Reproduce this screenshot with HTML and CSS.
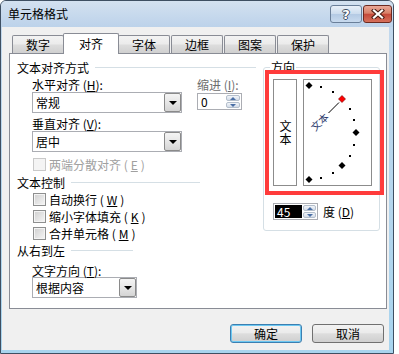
FILE: index.html
```html
<!DOCTYPE html>
<html lang="zh-CN">
<head>
    <meta charset="UTF-8">
    <title>单元格格式</title>
    <link rel="stylesheet" href="styles.css">
</head>
<body>
    <div class="window">
        <!-- Title bar -->
        <div class="titlebar">
            <span class="title">单元格格式</span>
            <div class="caption">
                <span class="cap-btn cap-help">?</span>
                <span class="cap-btn cap-close">
                    <svg width="14" height="10" viewBox="0 0 14 10">
                        <path d="M3 1.5 L11 8.5 M11 1.5 L3 8.5" stroke="#4a1c14" stroke-width="4.2" stroke-linecap="square"/>
                        <path d="M3 1.5 L11 8.5 M11 1.5 L3 8.5" stroke="#fff" stroke-width="2.2" stroke-linecap="square"/>
                    </svg>
                </span>
            </div>
        </div>

        <div class="client">
            <!-- Tabs -->
            <div class="tabs">
                <div class="tab">数字</div>
                <div class="tab active">对齐</div>
                <div class="tab">字体</div>
                <div class="tab">边框</div>
                <div class="tab">图案</div>
                <div class="tab">保护</div>
            </div>

            <div class="panel">
                <div class="col-left">
                    <div class="group-title gt-align">文本对齐方式</div>
                    <div class="align-row">
                        <div class="align-fields">
                            <div class="field-label">水平对齐 (<u>H</u>):</div>
                            <div class="combo combo-wide"><span>常规</span><i class="drop"></i></div>
                            <div class="field-label">垂直对齐 (<u>V</u>):</div>
                            <div class="combo combo-wide"><span>居中</span><i class="drop"></i></div>
                        </div>
                        <div class="indent">
                            <div class="field-label muted">缩进 (<u>I</u>):</div>
                            <div class="spin">
                                <span class="spin-value">0</span>
                                <span class="spin-btns"><i class="up"></i><i class="down"></i></span>
                            </div>
                        </div>
                    </div>
                    <div class="check disabled"><i class="box"></i>两端分散对齐 (<u>E</u>)</div>

                    <div class="group-title gt-control">文本控制</div>
                    <div class="check"><i class="box"></i>自动换行 (<u>W</u>)</div>
                    <div class="check"><i class="box"></i>缩小字体填充 (<u>K</u>)</div>
                    <div class="check"><i class="box"></i>合并单元格 (<u>M</u>)</div>

                    <div class="group-title gt-rtl">从右到左</div>
                    <div class="field-label indented">文字方向 (<u>T</u>):</div>
                    <div class="combo combo-dir"><span>根据内容</span><i class="drop"></i></div>
                </div>

                <div class="col-right">
                    <div class="orient">
                        <div class="orient-title">方向</div>
                        <div class="highlight">
                            <div class="vtext"><span>文本</span></div>
                            <div class="dial">
                                <svg width="67" height="105" viewBox="0 0 67 105">
                                    <g fill="#000">
                                        <polygon points="5,2 8.5,5.5 5,9 1.5,5.5"/>
                                        <polygon points="52,49 55.5,52.5 52,56 48.5,52.5"/>
                                        <polygon points="38,82 41.5,85.5 38,89 34.5,85.5"/>
                                        <polygon points="5,96 8.5,99.5 5,103 1.5,99.5"/>
                                        <rect x="16" y="6" width="2" height="2"/>
                                        <rect x="28" y="11" width="2" height="2"/>
                                        <rect x="45" y="28" width="2" height="2"/>
                                        <rect x="49" y="39" width="2" height="2"/>
                                        <rect x="49" y="64" width="2" height="2"/>
                                        <rect x="45" y="75" width="2" height="2"/>
                                        <rect x="28" y="92" width="2" height="2"/>
                                        <rect x="16" y="97" width="2" height="2"/>
                                    </g>
                                    <polygon points="38,15.5 41.5,19 38,22.5 34.5,19" fill="#f00" stroke="#600" stroke-width="0.6"/>
                                    <line x1="24.5" y1="33" x2="35" y2="22.5" stroke="#000" stroke-width="1"/>
                                    <text class="dial-text" x="5" y="4" transform="translate(5 52.5) rotate(-45)">文本</text>
                                </svg>
                            </div>
                        </div>
                        <div class="degree-row">
                            <div class="spin">
                                <span class="spin-value selected">45</span>
                                <span class="spin-btns"><i class="up"></i><i class="down"></i></span>
                            </div>
                            <span>度 (<u>D</u>)</span>
                        </div>
                    </div>
                </div>
            </div>

            <!-- Dialog buttons -->
            <div class="buttons">
                <div class="btn btn-default">确定</div>
                <div class="btn">取消</div>
            </div>
        </div>
    </div>
</body>
</html>
```

FILE: styles.css
```css
* {
    margin: 0;
    padding: 0;
    box-sizing: border-box;
}

body {
    background: #fff;
    font-family: "Noto Sans CJK SC", "Liberation Sans", sans-serif;
    font-size: 12px;
    line-height: 13px;
    color: #000;
}

u {
    text-decoration: underline;
    text-underline-offset: 1px;
}

/* Window frame */
.window {
    width: 394px;
    height: 354px;
    display: flex;
    flex-direction: column;
    padding: 0 4px 3px 1px;
    border: 1px solid #3e4f62;
    border-radius: 6px 6px 0 0;
    background: linear-gradient(#c4d8ec, #a8d4ee);
    overflow: hidden;
}

.titlebar {
    height: 26px;
    margin: 0 -4px 0 -1px;
    padding-left: 7px;
    display: flex;
    justify-content: space-between;
    align-items: flex-start;
    background: linear-gradient(#d3e1f0, #bcd2ea);
}

.title {
    margin-top: 6px;
}

.caption {
    display: flex;
    gap: 1px;
    margin: 4px 1px 0 0;
}

.cap-btn {
    height: 18px;
    border-radius: 3px;
    display: flex;
    align-items: center;
    justify-content: center;
}

.cap-help {
    width: 32px;
    border: 1px solid #6a7f99;
    background: linear-gradient(#e9f0f8, #ccdcee 48%, #b4cae4 52%, #c8daee);
    color: #fff;
    font: bold 13px "DejaVu Sans", sans-serif;
    text-shadow: 1px 0 #3e4c60, -1px 0 #3e4c60, 0 1px #3e4c60, 0 -1px #3e4c60;
}

.cap-close {
    width: 29px;
    border: 1px solid #6c2a20;
    background: linear-gradient(#eaa797, #d88068 45%, #c5493a 52%, #d6705b);
}

/* Client area */
.client {
    flex: 1;
    background: #f0f0f0;
    padding-top: 6px;
}

.tabs {
    height: 21px;
    padding-left: 10px;
    display: flex;
    align-items: flex-end;
    gap: 1px;
    position: relative;
    z-index: 1;
}

.tab {
    width: 52px;
    height: 18px;
    margin-bottom: 1px;
    border: 1px solid #898c95;
    border-bottom: none;
    border-radius: 2px 2px 0 0;
    background: linear-gradient(#f3f3f3, #ebebeb 48%, #dddddd 52%, #d0d0d0);
    text-align: center;
    line-height: 17px;
}

.tab.active {
    width: 56px;
    height: 21px;
    margin: 0 -2px;
    background: #fff;
    line-height: 19px;
    position: relative;
}

.panel {
    width: 378px;
    height: 256px;
    margin: -1px 0 0 7px;
    border: 1px solid #898c95;
    background: #fff;
    display: flex;
}

/* Left column */
.col-left {
    width: 246px;
    padding: 7px 0 0 7px;
}

.group-title {
    display: flex;
    align-items: center;
    gap: 6px;
}

.group-title::after {
    content: "";
    flex: 1;
    height: 1px;
    background: #d5dfe5;
}

.gt-align {
    width: 239px;
}

.gt-control {
    width: 183px;
    margin-top: 5px;
}

.gt-rtl {
    width: 116px;
    margin-top: 4px;
}

.align-row {
    display: flex;
    gap: 15px;
    padding-left: 15px;
}

.field-label {
    margin-top: 4px;
}

.field-label.indented {
    margin: 7px 0 0 15px;
}

.muted {
    color: #6d6d6d;
}

.combo {
    height: 21px;
    margin-top: 1px;
    padding-left: 3px;
    display: flex;
    align-items: center;
    justify-content: space-between;
    border: 1px solid #abadb3;
    background: #fff;
}

.combo-wide {
    width: 150px;
}

.combo-dir {
    width: 105px;
    margin-left: 15px;
    margin-top: 0;
}

.drop {
    width: 17px;
    height: 19px;
    border: 1px solid #8a8a8a;
    border-radius: 2px;
    background: linear-gradient(#f4f4f4, #e6e6e6 50%, #d4d4d4);
    display: flex;
    align-items: center;
    justify-content: center;
}

.drop::before {
    content: "";
    border-left: 4px solid transparent;
    border-right: 4px solid transparent;
    border-top: 4px solid #000;
    margin-top: 1px;
}

/* Spin boxes */
.indent .spin {
    margin-top: 2px;
}

.spin {
    width: 45px;
    height: 17px;
    padding: 1px;
    display: flex;
    gap: 1px;
    border: 1px solid #abadb3;
    background: #fff;
}

.spin-value {
    flex: 1;
    padding-left: 2px;
    line-height: 13px;
}

.spin-value.selected {
    flex: 0 0 27px;
    background: #000;
    color: #fff;
}

.spin-btns {
    width: 14px;
    display: flex;
    flex-direction: column;
    gap: 1px;
}

.spin-btns i {
    flex: 1;
    border: 1px solid #b4bfcc;
    border-radius: 2px;
    background: linear-gradient(#f2f5f9, #d3dce8);
    display: flex;
    align-items: center;
    justify-content: center;
}

.spin-btns i::before {
    content: "";
    border-left: 3px solid transparent;
    border-right: 3px solid transparent;
}

.spin-btns .up::before {
    border-bottom: 3px solid #4a6fa5;
}

.spin-btns .down::before {
    border-top: 3px solid #4a6fa5;
}

/* Checkboxes */
.check {
    margin-top: 4px;
    padding-left: 16px;
    display: flex;
    align-items: center;
    gap: 3px;
}

.align-row + .check {
    margin-top: 6px;
}

.box {
    width: 13px;
    height: 13px;
    border: 1px solid #8e8f8f;
    background: linear-gradient(135deg, #cfcfcf, #f6f6f6);
    box-shadow: inset 0 0 0 1px #f4f4f4;
}

.check.disabled {
    color: #a0a0a0;
}

.check.disabled .box {
    border-color: #c9c9c9;
    background: #f4f4f4;
}

/* Orientation group */
.col-right {
    padding: 13px 0 0 7px;
}

.orient {
    width: 117px;
    padding-bottom: 10px;
    border: 1px solid #d5dfe5;
    border-radius: 3px;
}

.orient-title {
    width: fit-content;
    margin: -8px 0 0 6px;
    padding: 0 1px;
    background: #fff;
}

.highlight {
    position: relative;
    width: 119px;
    height: 125px;
    margin: -3px 0 0 1px;
    padding: 5px 0 0 4px;
    border: 4px solid #ff3b3b;
    display: flex;
    gap: 6px;
}

.vtext {
    width: 24px;
    height: 107px;
    border: 1px solid #8c8c8c;
    display: flex;
    align-items: center;
    justify-content: center;
}

.vtext span {
    writing-mode: vertical-rl;
    text-orientation: upright;
    line-height: 12px;
    letter-spacing: 1px;
}

.dial {
    width: 69px;
    height: 107px;
    border: 1px solid #8c8c8c;
}

.dial svg {
    display: block;
}

.dial-text {
    font-family: "Noto Sans CJK SC", sans-serif;
    font-size: 10px;
    fill: #2b3b6c;
}

.degree-row {
    margin: 8px 0 0 9px;
    display: flex;
    align-items: center;
    gap: 5px;
}

/* Buttons */
.buttons {
    margin-top: 15px;
    padding-right: 5px;
    display: flex;
    justify-content: flex-end;
    gap: 10px;
}

.btn {
    width: 72px;
    height: 19px;
    border: 1px solid #707070;
    border-radius: 3px;
    background: linear-gradient(#f2f2f2, #ebebeb 45%, #dddddd 52%, #cfcfcf);
    text-align: center;
    line-height: 17px;
}

.btn-default {
    border-color: #3c7fb1;
    box-shadow: inset 0 0 0 1px #6cc8f2;
}
```
